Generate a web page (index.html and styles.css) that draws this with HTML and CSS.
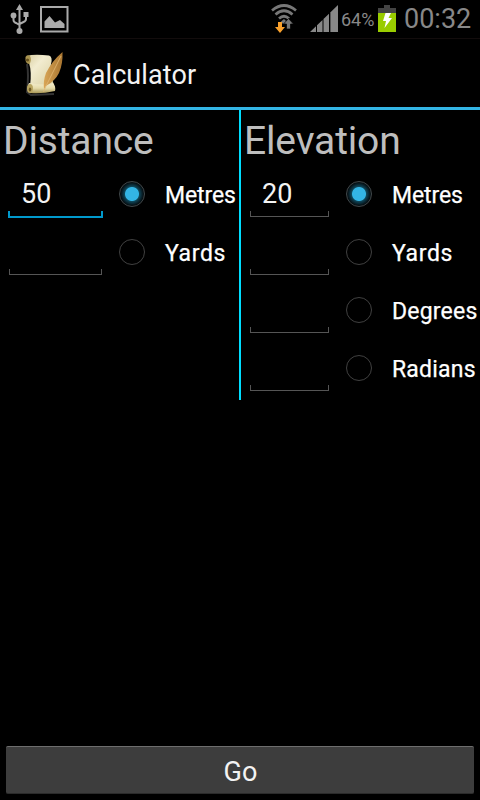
FILE: index.html
```html
<!DOCTYPE html>
<html lang="en">
<head>
<meta charset="utf-8">
<title>Calculator</title>
<link rel="stylesheet" href="styles.css">
</head>
<body>
<div class="status">
  <svg class="usb" width="20" height="30" viewBox="0 0 20 30" fill="#aaa" stroke="#aaa">
    <path d="M9.500 0L13 6H6Z" stroke="none"/>
    <path d="M9.500 4V25M3.500 11V16Q3.500 18 6 19L9.500 21M16 10V15Q16 17 13.500 18L9.500 20" fill="none" stroke-width="2"/>
    <circle cx="3.500" cy="11.500" r="2.900" stroke="none"/><path d="M13.500 8h5v5h-5z" stroke="none"/><circle cx="9.500" cy="27" r="3" stroke="none"/>
  </svg>
  <svg class="photo" width="29" height="27" viewBox="0 0 29 27">
    <path d="M1 1H27.500V25.500H1Z" fill="none" stroke="#aaa" stroke-width="2"/>
    <path d="M4.500 22V15.500L9.500 10L15 16.500L20 14L24.500 18V22Z" fill="#aaa"/>
  </svg>
  <svg class="wifi" width="27" height="30" viewBox="0 0 27 30">
    <g fill="none" stroke="#777" stroke-width="2.700"><path d="M1 6.500Q13 -3.500 25 6.500"/><path d="M4.500 10.500Q13 3 21.500 10.500"/><path d="M8 14.500Q13 10 18 14.500"/></g>
    <path d="M10 17.500L13 15L15 17V20H12Z" fill="#777"/>
    <path d="M7 18H11V23H14L9 29L4 23H7Z" fill="#f9a02c"/>
    <path d="M15.500 25H19.500V20H22.500L17.500 14.500L12.500 20H15.500Z" fill="#777" stroke="#000" stroke-width=".7"/>
  </svg>
  <svg class="signal" width="28" height="27" viewBox="0 0 28 27" fill="#888">
    <path d="M0 27L6 21.200V27ZM7 27V20.200L12.500 14.900V27ZM13.500 27V14L19 8.700V27ZM20 27V7.700L28 0V27Z"/>
    <path d="M20.500 7V27" stroke="#555" stroke-width="1"/>
  </svg>
  <span class="percent">64%</span>
  <svg class="battery" width="18" height="27" viewBox="0 0 18 27">
    <path d="M6 0H12V3H18V8H0V3H6Z" fill="#444"/><path d="M0 8H18V27H0Z" fill="#99cc00"/>
    <path d="M7.500 8H13L10.500 13H14L6.500 23L8 16H5Z" fill="#fff"/>
  </svg>
  <span class="clock">00:32</span>
</div>
<header class="bar">
  <svg class="scroll" width="42" height="46" viewBox="0 0 42 46">
    <defs>
      <linearGradient id="paper" x1="0" y1="0" x2="1" y2="1"><stop offset="0" stop-color="#d8cda0"/><stop offset=".35" stop-color="#f2ecd0"/><stop offset="1" stop-color="#d9cf9f"/></linearGradient>
      <linearGradient id="roll" x1="0" y1="0" x2="0" y2="1"><stop offset="0" stop-color="#f4edcd"/><stop offset=".5" stop-color="#e5dbaa"/><stop offset="1" stop-color="#a69554"/></linearGradient>
      <linearGradient id="quill" x1="0" y1="0" x2="1" y2="0"><stop offset="0" stop-color="#d9a657"/><stop offset="1" stop-color="#a8742f"/></linearGradient>
    </defs>
    <path d="M3 11Q5 21 3 39L7 42L30 41" fill="none" stroke="#333" stroke-width="2"/>
    <path d="M3 3Q9 1 25 2.500Q29 4 27 11Q25 19 30 32L6 33Q8 19 5 10Z" fill="url(#paper)"/>
    <path d="M1.500 4Q3 1 6 3Q8 7 5.500 11Q2 11 1.500 7Z" fill="#a99450"/><circle cx="3.500" cy="7" r="1.600" fill="#65501f"/>
    <path d="M5 30Q18 33 29 30Q32 33 31 38Q18 41 6 40Q2 36 5 30Z" fill="url(#roll)"/>
    <ellipse cx="6" cy="35.500" rx="3" ry="4.500" fill="#b8a560"/><ellipse cx="6" cy="36.500" rx="1.300" ry="2" fill="#6f5924"/>
    <path d="M38.500 -1Q39 11 35 20Q31 28 22 33L20 36Q19 28 22 20Q28 8 38.500 -1Z" fill="url(#quill)"/>
    <path d="M37 3L22 33L19.500 39" fill="none" stroke="#e2b873" stroke-width=".8"/>
  </svg>
  <h1>Calculator</h1>
</header>
<main class="columns">
  <section class="distance">
    <h2>Distance</h2>
    <div class="row"><span class="field focus">50</span><i class="radio on"></i><span class="label tight">Metres</span></div>
    <div class="row"><span class="field"></span><i class="radio"></i><span class="label wide">Yards</span></div>
  </section>
  <section class="elevation">
    <h2>Elevation</h2>
    <div class="row"><span class="field">20</span><i class="radio on"></i><span class="label tight">Metres</span></div>
    <div class="row"><span class="field"></span><i class="radio"></i><span class="label wide">Yards</span></div>
    <div class="row"><span class="field"></span><i class="radio"></i><span class="label">Degrees</span></div>
    <div class="row"><span class="field"></span><i class="radio"></i><span class="label">Radians</span></div>
  </section>
</main>
<button class="go">Go</button>
</body>
</html>
```
FILE: styles.css
```css
*, *::after { box-sizing: border-box; }
body {
  margin: 0;
  width: 480px;
  height: 800px;
  display: flex;
  flex-direction: column;
  background: #000;
  color: #f3f3f3;
  font-family: Roboto, sans-serif;
  overflow: hidden;
}
svg { display: block; flex: none; overflow: visible; }
.status { display: flex; height: 38px; align-items: flex-start; color: #888; }
.usb { margin: 4px 0 0 10px; }
.photo { margin: 6px 0 0 10px; }
.wifi { margin: 4px 0 0 202px; }
.signal { margin: 5px 0 0 12px; }
.percent { width: 37px; margin-left: 3px; font-size: 18px; line-height: 40px; white-space: nowrap; }
.battery { margin: 5px 0 0 0; }
.clock { margin-left: 8px; font-size: 27px; line-height: 38px; }
.bar {
  display: flex;
  height: 72px;
  border-top: 1px solid #120c0c;
  border-bottom: 3px solid #33b5e5;
}
.scroll { margin: 14px 0 0 24px; }
h1 { margin: 2px 0 0 7px; font-size: 27px; font-weight: 400; line-height: 68px; letter-spacing: .1px; }
.columns { display: flex; height: 290px; }
.distance { width: 239px; }
.elevation { width: 241px; border-left: 2px solid #00ddff; }
h2 {
  height: 55px;
  margin: 0;
  padding-left: 3px;
  color: #bebebe;
  font-size: 39px;
  font-weight: 400;
  line-height: 62px;
  letter-spacing: -.15px;
}
.row { display: flex; height: 58px; }
.field {
  position: relative;
  width: 93px;
  height: 52px;
  margin-left: 9px;
  padding-left: 12px;
  font-size: 27px;
  line-height: 58px;
}
.field::after {
  content: "";
  position: absolute;
  left: 0;
  right: 0;
  bottom: 0;
  height: 6px;
  border: solid #555;
  border-width: 0 1px 1px;
}
.field.focus::after {
  left: -1px;
  right: -1px;
  bottom: -1px;
  height: 7px;
  border: solid #0099cc;
  border-width: 0 2px 2px;
}
.elevation .field { width: 79px; }
.radio {
  width: 26px;
  height: 26px;
  margin: 16px 0 0 17px;
  border: 1px solid #414141;
  border-radius: 50%;
}
.radio.on {
  border-color: #41484b;
  background: radial-gradient(circle, #33b5e5 0 6.5px, #0f4658 7.5px, #09222c 10px, #04090b 12px);
}
.label {
  height: 58px;
  margin-left: 20px;
  color: #fff;
  font-size: 23px;
  line-height: 62px;
  letter-spacing: .2px;
  white-space: nowrap;
  -webkit-text-stroke: .25px #fff;
}
.label.tight { letter-spacing: -.1px; }
.label.wide { letter-spacing: .6px; }
.go {
  height: 48px;
  margin: auto 6px 6px;
  padding: 4px 0 0 1px;
  border: 0;
  border-top: 1px solid #6e6e6e;
  border-bottom: 1px solid #2b2b2b;
  border-radius: 2px;
  background: #3d3d3d;
  color: #f3f3f3;
  font: 27px/43px Roboto, sans-serif;
}
```
